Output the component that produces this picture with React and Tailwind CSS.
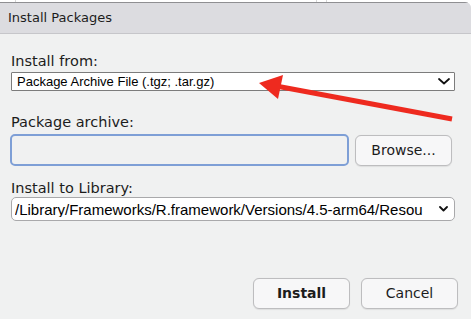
import React from 'react'

const UI_FONT = { fontFamily: '"DejaVu Sans", "Noto Sans", sans-serif' }
const FIELD_FONT = { fontFamily: '"Liberation Sans", Arial, sans-serif' }

function Chevron({ w = 11, h = 7 }) {
  return (
    <svg width={w} height={h} viewBox={`0 0 ${w} ${h}`} className="shrink-0">
      <polyline
        points={`1,1 ${w / 2},${h - 1.5} ${w - 1},1`}
        fill="none"
        stroke="#111"
        strokeWidth="1.8"
        strokeLinecap="round"
        strokeLinejoin="round"
      />
    </svg>
  )
}

function Label({ children, className }) {
  return (
    <div className={`text-[14.5px] leading-[17px] text-[#1c1c1c] ${className}`} style={UI_FONT}>
      {children}
    </div>
  )
}

function Button({ children, bold }) {
  return (
    <button
      className={`h-[31px] w-[97px] rounded-[6px] border border-[#bdbdbf] bg-[#f7f7f8] text-[14px] text-[#1c1c1c] shadow-[0_0.5px_1px_rgba(0,0,0,0.08)] ${bold ? 'font-bold' : ''}`}
      style={UI_FONT}
    >
      {children}
    </button>
  )
}

export default function App() {
  return (
    <div className="relative w-[471px] h-[319px] overflow-hidden bg-white">
      {/* sliver of the window behind */}
      <div className="relative h-[2px] bg-white">
        <div className="absolute left-[15px] top-0 h-full w-px bg-[#d6d6d6]" />
        <div className="absolute left-[316px] top-0 h-full w-px bg-[#d6d6d6]" />
        <div className="absolute left-[326px] top-0 h-full w-px bg-[#d6d6d6]" />
      </div>

      <div className="h-[317px] bg-[#f0f1f1] rounded-tr-[6px] overflow-hidden">
        {/* title bar */}
        <div
          className="h-[32px] flex items-center pl-[8px] bg-[#dcdce0] border-t border-[#8f8f92] border-b border-b-[#c6c6ca] text-[13px] text-[#1c1c1c]"
          style={UI_FONT}
        >
          Install Packages
        </div>

        <div className="pl-[11px] pr-[16px]">
          <Label className="mt-[19px]">Install from:</Label>
          <div className="mt-[2px] h-[19px] w-[444px] flex items-center justify-between pl-[5px] pr-[4px] bg-white border border-[#7c7c7c] rounded-[1px]">
            <span className="text-[13px] text-black leading-none" style={FIELD_FONT}>
              Package Archive File (.tgz; .tar.gz)
            </span>
            <Chevron w={12} h={7} />
          </div>

          <Label className="mt-[23px]">Package archive:</Label>
          <div className="mt-[3px] flex items-center gap-[6px] -ml-px">
            <div className="h-[32px] w-[339px] rounded-[5px] border-2 border-[#7e9fd6]" />
            <Button>Browse...</Button>
          </div>

          <Label className="mt-[14px]">Install to Library:</Label>
          <div className="h-[24px] w-[444px] flex items-center pl-[3px] pr-[6px] gap-[6px] bg-white border border-[#a9a9ab] rounded-[5px]">
            <span className="flex-1 overflow-hidden whitespace-nowrap text-[15px] text-black leading-none" style={FIELD_FONT}>
              /Library/Frameworks/R.framework/Versions/4.5-arm64/Resou
            </span>
            <Chevron w={9} h={6} />
          </div>

          <div className="mt-[57px] flex justify-end gap-[11px] mr-[-3px]">
            <Button bold>Install</Button>
            <Button>Cancel</Button>
          </div>
        </div>
      </div>

      {/* red annotation arrow */}
      <svg className="absolute inset-0 pointer-events-none" width="471" height="319">
        <line x1="452" y1="119" x2="276" y2="86" stroke="#ee2a1f" strokeWidth="5" />
        <polygon points="259,83 283,75 278,99" fill="#ee2a1f" />
      </svg>
    </div>
  )
}
